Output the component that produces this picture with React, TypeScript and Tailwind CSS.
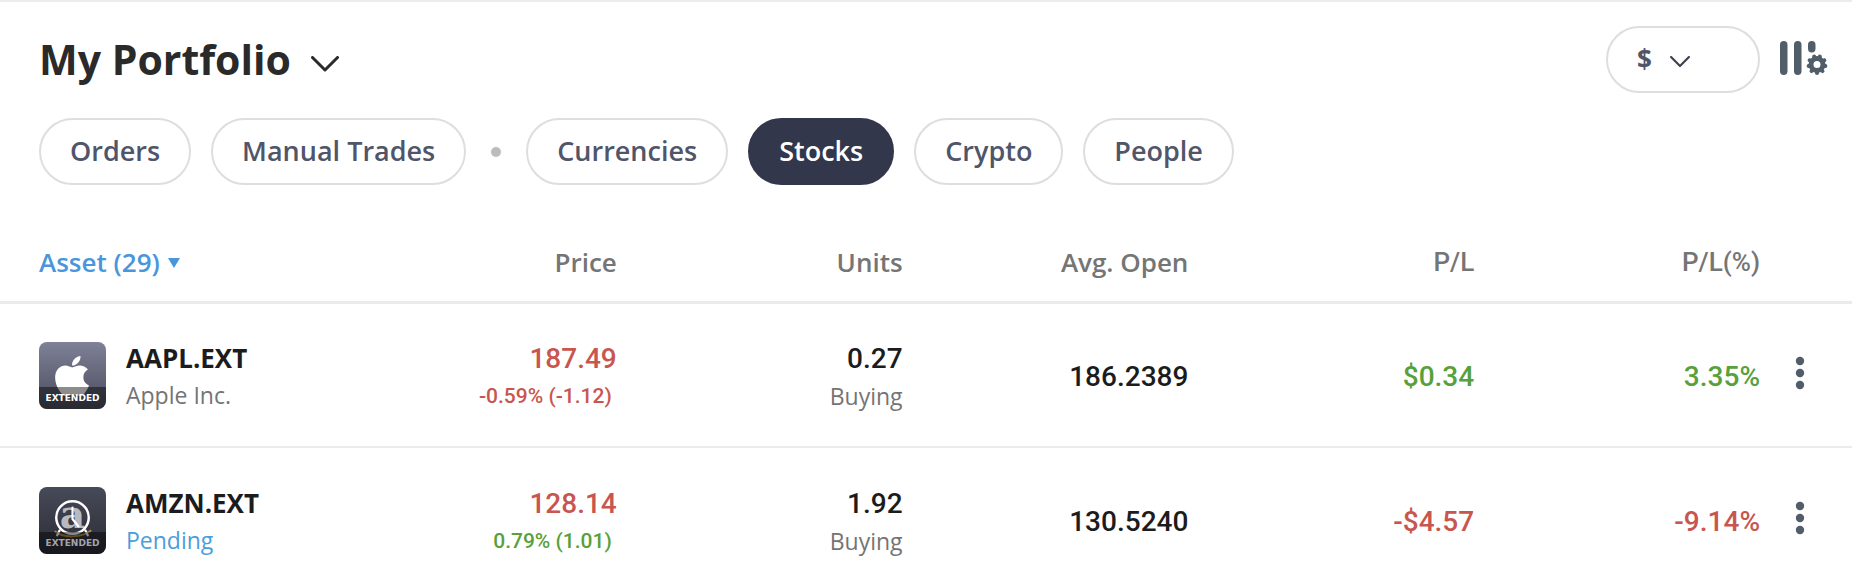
import React, { useState } from 'react';
import { FaApple } from 'react-icons/fa';
import { clsx } from 'clsx';
import { twMerge } from 'tailwind-merge';

function cn(...inputs: (string | undefined | null | false)[]) {
    return twMerge(clsx(inputs));
}

type Tone = 'up' | 'down';

interface Position {
    symbol: string;
    subtitle: string;
    pending?: boolean;
    logo: React.ReactNode;
    logoBg: string;
    labelColor: string;
    price: string;
    priceTone: Tone;
    change: string;
    changeTone: Tone;
    units: string;
    side: string;
    avgOpen: string;
    pl: string;
    plPercent: string;
    plTone: Tone;
}

const TONE_COLOR: Record<Tone, string> = {
    up: 'text-[#58a13a]',
    down: 'text-[#c8564f]',
};

const ASSET_FILTERS = ['Currencies', 'Stocks', 'Crypto', 'People'];
const COLUMNS = ['Price', 'Units', 'Avg. Open'];
const GEAR_TEETH = [0, 40, 80, 120, 160, 200, 240, 280, 320];

function ChevronIcon({ className }: { className?: string }) {
    return (
        <svg viewBox="0 0 28 16" fill="none" stroke="currentColor" strokeLinecap="round" strokeLinejoin="round" className={className} aria-hidden="true">
            <path d="M1.5 1.5 14 14 26.5 1.5" strokeWidth="3" />
        </svg>
    );
}

function ClockLogo() {
    return (
        <svg viewBox="0 0 68 68" className="absolute inset-0 size-full" aria-hidden="true">
            <path d="M16 45c8 7 28 7 37-1" fill="none" stroke="#b58a3c" strokeWidth="2" />
            <text x="34" y="42" textAnchor="middle" fontSize="40" fontWeight="700" fill="#b9bac0" fontFamily="DejaVu Serif, serif">
                a
            </text>
            <circle cx="34" cy="31" r="16.5" fill="none" stroke="#fff" strokeWidth="2.5" />
            <path d="M34 21v11.5l6 7.5M21 44l-2.5 5M47 44l2.5 5" fill="none" stroke="#fff" strokeWidth="2.2" strokeLinecap="round" />
        </svg>
    );
}

function ColumnSettingsIcon() {
    return (
        <svg viewBox="0 0 48 36" className="w-12" fill="#515d69" stroke="#515d69" aria-hidden="true">
            <g stroke="none">
                <rect x="0" y="1" width="7.5" height="34" rx="3.7" />
                <rect x="14" y="1" width="7.5" height="34" rx="3.7" />
                <rect x="28" y="1" width="7.5" height="11.5" rx="3.7" />
            </g>
            <circle cx="37" cy="24.5" r="6" fill="none" strokeWidth="5" />
            {GEAR_TEETH.map((angle) => (
                <path key={angle} d="M37 31v2" strokeWidth="4" strokeLinecap="round" transform={`rotate(${angle} 37 24.5)`} />
            ))}
        </svg>
    );
}

const POSITIONS: Position[] = [
    {
        symbol: 'AAPL.EXT',
        subtitle: 'Apple Inc.',
        logo: <FaApple className="absolute top-[11px] left-[10px] size-[46px] text-white" aria-hidden="true" />,
        logoBg: 'from-[#7f8198] to-[#4b4c5c]',
        labelColor: 'text-white',
        price: '187.49',
        priceTone: 'down',
        change: '-0.59% (-1.12)',
        changeTone: 'down',
        units: '0.27',
        side: 'Buying',
        avgOpen: '186.2389',
        pl: '$0.34',
        plPercent: '3.35%',
        plTone: 'up',
    },
    {
        symbol: 'AMZN.EXT',
        subtitle: 'Pending',
        pending: true,
        logo: <ClockLogo />,
        logoBg: 'from-[#474a58] to-[#2b2c36]',
        labelColor: 'text-[#a3a4aa]',
        price: '128.14',
        priceTone: 'down',
        change: '0.79% (1.01)',
        changeTone: 'up',
        units: '1.92',
        side: 'Buying',
        avgOpen: '130.5240',
        pl: '-$4.57',
        plPercent: '-9.14%',
        plTone: 'down',
    },
];

function FilterPill({ label, active, onClick }: { label: string; active: boolean; onClick: () => void }) {
    return (
        <button
            type="button"
            aria-pressed={active}
            onClick={onClick}
            className={cn(
                'h-[67px] rounded-full border-2 border-[#dedede] px-[29px] text-[27px] font-semibold text-[#50556a]',
                active && 'border-[#32374b] bg-[#32374b] text-white'
            )}
        >
            {label}
        </button>
    );
}

function PositionRow({ position }: { position: Position }) {
    return (
        <tr className="h-[145px] border-b-2 border-[#ebebeb]">
            <td className="pt-0.5 pl-[39px]">
                <div className="flex items-center gap-5">
                    <div className={cn('relative size-[67px] shrink-0 overflow-hidden rounded-lg bg-linear-to-b', position.logoBg)}>
                        {position.logo}
                        <span className={cn("absolute inset-x-0 bottom-0 h-[22px] bg-black/45 text-center font-['DejaVu_Sans'] text-[9px] leading-[22px] font-bold", position.labelColor)}>
                            EXTENDED
                        </span>
                    </div>
                    <div>
                        <p className="text-[26px] leading-[38px] font-bold text-[#1c1c1c]">{position.symbol}</p>
                        <p className={cn('text-[23px] leading-9 text-[#747474]', position.pending && 'text-[#4a9edb]')}>
                            {position.subtitle}
                        </p>
                    </div>
                </div>
            </td>
            <td className="pt-1 text-right font-['Roboto']">
                <p className={cn('text-[28px] leading-[38px] font-medium', TONE_COLOR[position.priceTone])}>{position.price}</p>
                <p className={cn('pr-[5px] text-[21px] leading-9 font-medium', TONE_COLOR[position.changeTone])}>{position.change}</p>
            </td>
            <td className="pt-1 text-right">
                <p className="font-['Roboto'] text-[28px] leading-[38px] font-medium text-[#1c1c1c]">{position.units}</p>
                <p className="text-[23px] leading-9 text-[#747474]">{position.side}</p>
            </td>
            <td className="pt-1 text-right font-['Roboto'] text-[28px] font-medium text-[#1c1c1c]">{position.avgOpen}</td>
            <td className={cn("pt-1 text-right font-['Roboto'] text-[28px] font-medium", TONE_COLOR[position.plTone])}>{position.pl}</td>
            <td className={cn("pt-1 text-right font-['Roboto'] text-[28px] font-medium", TONE_COLOR[position.plTone])}>{position.plPercent}</td>
            <td className="pl-[30px]">
                <button type="button" aria-label={`Actions for ${position.symbol}`} className="block pb-1">
                    <svg viewBox="0 0 20 36" className="w-5" fill="#515d69" aria-hidden="true">
                        <circle cx="10" cy="6" r="4.2" />
                        <circle cx="10" cy="18" r="4.2" />
                        <circle cx="10" cy="30" r="4.2" />
                    </svg>
                </button>
            </td>
        </tr>
    );
}

export default function App() {
    const [filter, setFilter] = useState('Stocks');

    return (
        <main className="h-screen overflow-hidden border-t-2 border-[#ececec] bg-white font-['Open_Sans',sans-serif]">
            <header className="flex items-center justify-between pt-6 pr-6 pl-[39px]">
                <h1>
                    <button type="button" className="flex items-center gap-5 text-[41px] leading-[67px] font-bold text-[#2a2a2a]">
                        My Portfolio
                        <ChevronIcon className="mt-2 w-7" />
                    </button>
                </h1>
                <div className="flex items-center gap-5">
                    <div className="relative">
                        <select
                            aria-label="Currency"
                            className="block h-[67px] w-[154px] appearance-none rounded-full border-2 border-[#dedede] bg-white pl-[29px] text-[26px] font-bold text-[#50556a]"
                        >
                            <option>$</option>
                        </select>
                        <ChevronIcon className="pointer-events-none absolute top-[30px] left-16 w-5 text-[#3c4150]" />
                    </div>
                    <button type="button" aria-label="Column settings" className="pb-1">
                        <ColumnSettingsIcon />
                    </button>
                </div>
            </header>

            <nav className="flex items-center gap-5 pt-[25px] pl-[39px]">
                {['Orders', 'Manual Trades'].map((label) => (
                    <FilterPill key={label} label={label} active={filter === label} onClick={() => setFilter(label)} />
                ))}
                <span className="mx-[5px] size-2.5 rounded-full bg-[#bcbcbc]" />
                {ASSET_FILTERS.map((label) => (
                    <FilterPill key={label} label={label} active={filter === label} onClick={() => setFilter(label)} />
                ))}
            </nav>

            <table className="mt-10 w-full table-fixed border-collapse">
                <colgroup>
                    <col className="w-[331px]" />
                    <col />
                    <col />
                    <col />
                    <col />
                    <col />
                    <col className="w-[92px]" />
                </colgroup>
                <thead>
                    <tr className="h-[77px] border-b-3 border-[#ebebeb] text-[26px] text-[#757575]">
                        <th className="pl-[39px] text-left font-semibold">
                            <button type="button" className="flex items-center gap-2 text-[#4a96dc]">
                                Asset (29)
                                <svg viewBox="0 0 12 10" className="w-3" fill="currentColor" aria-hidden="true">
                                    <path d="M0 0h12L6 10z" />
                                </svg>
                            </button>
                        </th>
                        {COLUMNS.map((label) => (
                            <th key={label} className="text-right font-semibold">{label}</th>
                        ))}
                        <th className="text-right font-['Roboto'] font-medium">P/L</th>
                        <th className="text-right font-['Roboto'] font-medium">P/L(%)</th>
                        <th aria-label="Actions" />
                    </tr>
                </thead>
                <tbody>
                    {POSITIONS.map((position) => (
                        <PositionRow key={position.symbol} position={position} />
                    ))}
                </tbody>
            </table>
        </main>
    );
}
